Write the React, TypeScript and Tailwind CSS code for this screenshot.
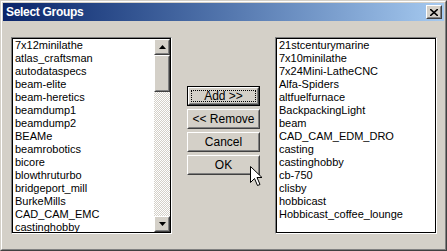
const leftGroups = [
  "7x12minilathe",
  "atlas_craftsman",
  "autodataspecs",
  "beam-elite",
  "beam-heretics",
  "beamdump1",
  "beamdump2",
  "BEAMe",
  "beamrobotics",
  "bicore",
  "blowthruturbo",
  "bridgeport_mill",
  "BurkeMills",
  "CAD_CAM_EMC",
  "castinghobby",
];

const rightGroups = [
  "21stcenturymarine",
  "7x10minilathe",
  "7x24Mini-LatheCNC",
  "Alfa-Spiders",
  "altfuelfurnace",
  "BackpackingLight",
  "beam",
  "CAD_CAM_EDM_DRO",
  "casting",
  "castinghobby",
  "cb-750",
  "clisby",
  "hobbicast",
  "Hobbicast_coffee_lounge",
];

// raised 3d box, classic windows look
function Raised({ className = "", children }: { className?: string; children?: React.ReactNode }) {
  return (
    <div className={`border border-t-white border-l-white border-b-[#404040] border-r-[#404040] ${className}`}>
      <div className="w-full h-full border border-t-[#d4d0c8] border-l-[#d4d0c8] border-b-[#808080] border-r-[#808080] bg-[#d4d0c8] flex items-center justify-center">
        {children}
      </div>
    </div>
  );
}

function Arrow({ down }: { down?: boolean }) {
  return (
    <svg width="7" height="4" viewBox="0 0 7 4" className={down ? "rotate-180" : ""}>
      <path d="M3.5 0 L7 4 L0 4 Z" fill="#000" />
    </svg>
  );
}

function ListBox({ items, scroll, width }: { items: string[]; scroll?: boolean; width: string }) {
  return (
    <div className={`${width} h-[197px] border border-t-[#808080] border-l-[#808080] border-b-white border-r-white`}>
      <div className="w-full h-full border border-black bg-white flex">
        <ul className="flex-1 overflow-hidden pl-[2px] text-[11px] leading-[13px] text-black">
          {items.map((g) => (
            <li key={g} className="h-[13px] whitespace-nowrap">{g}</li>
          ))}
        </ul>
        {scroll && (
          <div className="w-4 flex flex-col">
            <Raised className="h-4 shrink-0">
              <Arrow />
            </Raised>
            <Raised className="h-[37px] shrink-0" />
            <div className="flex-1 bg-[repeating-conic-gradient(#d4d0c8_0_25%,#ffffff_0_50%)] bg-[length:2px_2px]" />
            <Raised className="h-4 shrink-0">
              <Arrow down />
            </Raised>
          </div>
        )}
      </div>
    </div>
  );
}

function Btn({ label, isDefault }: { label: string; isDefault?: boolean }) {
  if (isDefault) {
    return (
      <div className="w-[73px] h-5 border border-black">
        <Raised className="w-full h-full">
          <div className="w-[calc(100%-2px)] h-[calc(100%-2px)] border border-dotted border-black flex items-center justify-center leading-none">
            {label}
          </div>
        </Raised>
      </div>
    );
  }
  return (
    <Raised className="w-[73px] h-5">
      <span className="leading-none">{label}</span>
    </Raised>
  );
}

export default function App() {
  return (
    <div className="w-[447px] h-[251px] border border-t-[#d4d0c8] border-l-[#d4d0c8] border-b-[#404040] border-r-[#404040] font-['Liberation_Sans',Arial,sans-serif]">
      <div className="w-full h-full border border-t-white border-l-white border-b-[#808080] border-r-[#808080] bg-[#d4d0c8] p-px flex flex-col relative">
        {/* Title bar */}
        <div className="h-[18px] shrink-0 bg-gradient-to-r from-[#0a246a] to-[#a6caf0] flex items-center justify-between pl-[3px] pr-[2px]">
          <span className="text-white font-bold text-[12px] tracking-[-0.3px]">Select Groups</span>
          <Raised className="w-4 h-[14px]">
            <svg width="8" height="7" viewBox="0 0 8 7">
              <path d="M0 0 L8 7 M8 0 L0 7" stroke="#000" strokeWidth="1.6" />
            </svg>
          </Raised>
        </div>

        {/* Body */}
        <div className="flex pt-[16px] pl-2 gap-[15px] text-black">
          <ListBox items={leftGroups} scroll width="w-[161px]" />
          <div className="flex flex-col gap-[3px] mt-[49px] text-[12px]">
            <Btn label="Add >>" isDefault />
            <Btn label="<< Remove" />
            <Btn label="Cancel" />
            <Btn label="OK" />
          </div>
          <ListBox items={rightGroups} width="w-[162px]" />
        </div>

        {/* Mouse pointer over OK */}
        <svg className="absolute left-[248px] top-[164px]" width="13" height="21" viewBox="0 0 13 21">
          <path
            d="M0.5 0.5 L0.5 16.5 L4.5 12.5 L7.5 19.5 L10 18.5 L7 11.5 L12 11.5 Z"
            fill="#fff"
            stroke="#000"
            strokeWidth="1"
            strokeLinejoin="miter"
          />
        </svg>
      </div>
    </div>
  );
}
